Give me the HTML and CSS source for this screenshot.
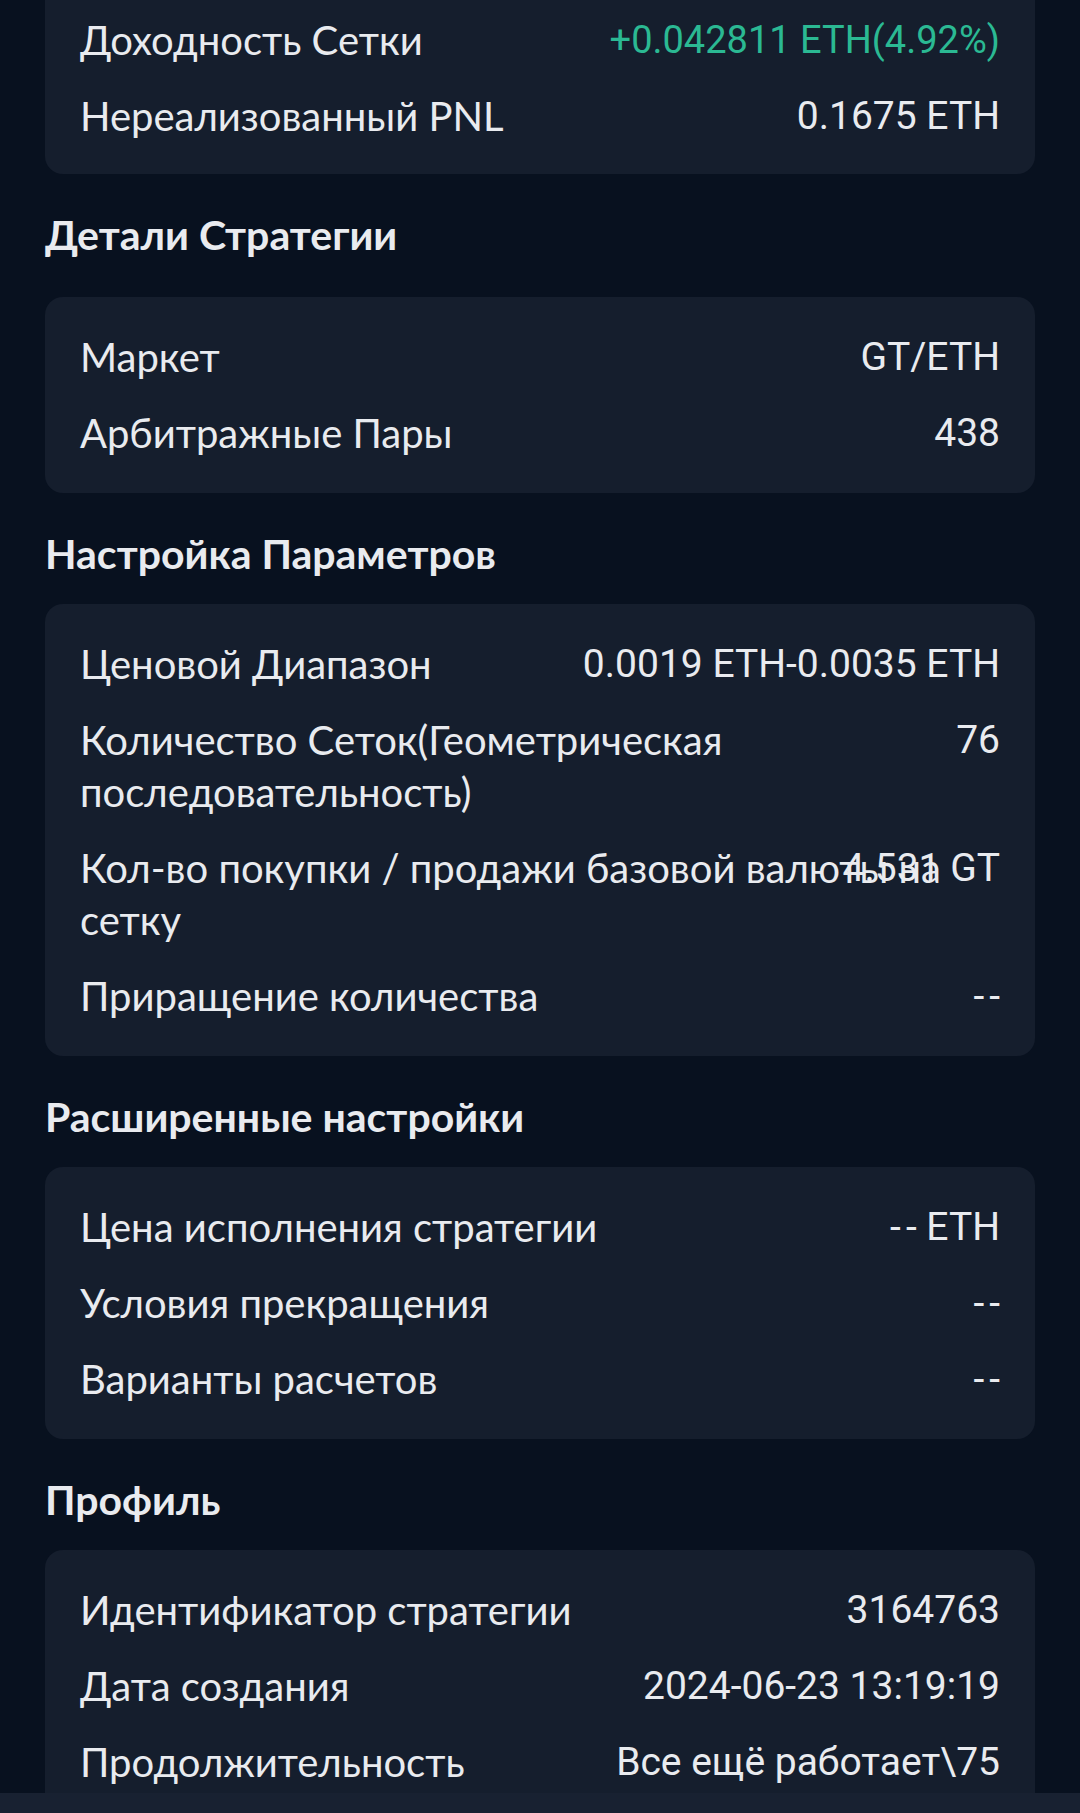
FILE: index.html
```html
<!DOCTYPE html>
<html lang="ru">
<head>
  <meta charset="UTF-8" />
  <meta name="viewport" content="width=device-width, initial-scale=1.0" />
  <title>Детали стратегии</title>
  <link rel="stylesheet" href="styles.css">
</head>
<body>

  <main class="page">

    <!-- Доход -->
    <section class="card card--cut">
      <div class="row">
        <span class="label">Доходность Сетки</span>
        <span class="value value--up">+0.042811 ETH(4.92%)</span>
      </div>
      <div class="row">
        <span class="label">Нереализованный PNL</span>
        <span class="value">0.1675 ETH</span>
      </div>
    </section>

    <h2 class="section-title section-title--wide">Детали Стратегии</h2>
    <section class="card">
      <div class="row">
        <span class="label">Маркет</span>
        <span class="value">GT/ETH</span>
      </div>
      <div class="row">
        <span class="label">Арбитражные Пары</span>
        <span class="value">438</span>
      </div>
    </section>

    <h2 class="section-title">Настройка Параметров</h2>
    <section class="card">
      <div class="row">
        <span class="label">Ценовой Диапазон</span>
        <span class="value">0.0019 ETH-0.0035 ETH</span>
      </div>
      <div class="row">
        <span class="label">Количество Сеток(Геометрическая последовательность)</span>
        <span class="value">76</span>
      </div>
      <div class="row">
        <span class="label">Кол-во покупки / продажи базовой валюты на сетку</span>
        <span class="value">4.531 GT</span>
      </div>
      <div class="row">
        <span class="label">Приращение количества</span>
        <span class="value"><span class="dash">--</span></span>
      </div>
    </section>

    <h2 class="section-title">Расширенные настройки</h2>
    <section class="card">
      <div class="row">
        <span class="label">Цена исполнения стратегии</span>
        <span class="value"><span class="dash">--</span> ETH</span>
      </div>
      <div class="row">
        <span class="label">Условия прекращения</span>
        <span class="value"><span class="dash">--</span></span>
      </div>
      <div class="row">
        <span class="label">Варианты расчетов</span>
        <span class="value"><span class="dash">--</span></span>
      </div>
    </section>

    <h2 class="section-title">Профиль</h2>
    <section class="card">
      <div class="row">
        <span class="label">Идентификатор стратегии</span>
        <span class="value">3164763</span>
      </div>
      <div class="row">
        <span class="label">Дата создания</span>
        <span class="value">2024-06-23 13:19:19</span>
      </div>
      <div class="row">
        <span class="label">Продолжительность</span>
        <span class="value">Все ещё работает\75</span>
      </div>
    </section>

  </main>

  <div class="bottom-bar"></div>

</body>
</html>
```

FILE: styles.css
```css
:root {
  --fundo: #08111f;
  --card: #151e2d;
  --texto: #e9ebef;
  --verde: #2bb993;
  --barra: #182131;
}

* {
  box-sizing: border-box;
}

html {
  overflow: hidden;
}

body {
  font-family: Lato, "Noto Sans", sans-serif;
  background-color: var(--fundo);
  color: var(--texto);
  margin: 0;
  padding: 0;
}

.page {
  padding: 0 45px;
}

.card {
  background-color: var(--card);
  border-radius: 18px;
  padding: 34px 35px 34px 35px;
  display: flex;
  flex-direction: column;
  gap: 24px;
}

.card--cut {
  padding-top: 14px;
  padding-bottom: 32px;
  border-top-left-radius: 0;
  border-top-right-radius: 0;
}

.section-title {
  margin: 35px 0 24px 0;
  font-size: 41px;
  line-height: 52px;
  font-weight: 700;
  color: var(--texto);
}

.section-title--wide {
  margin-bottom: 36px;
}

/* label e valor dividem a mesma célula */
.row {
  display: grid;
  font-size: 40px;
  line-height: 52px;
}

.row > span {
  grid-area: 1 / 1;
}

.label {
  justify-self: start;
}

.value {
  justify-self: end;
  text-align: right;
  font-family: Roboto, "Noto Sans", sans-serif;
  font-size: 39px;
  white-space: nowrap;
}

.value--up {
  color: var(--verde);
  font-size: 38px;
}

.dash {
  letter-spacing: 5px;
  margin-right: -5px;
}

.bottom-bar {
  position: fixed;
  left: 0;
  right: 0;
  bottom: 0;
  height: 20px;
  background-color: var(--barra);
}
```
